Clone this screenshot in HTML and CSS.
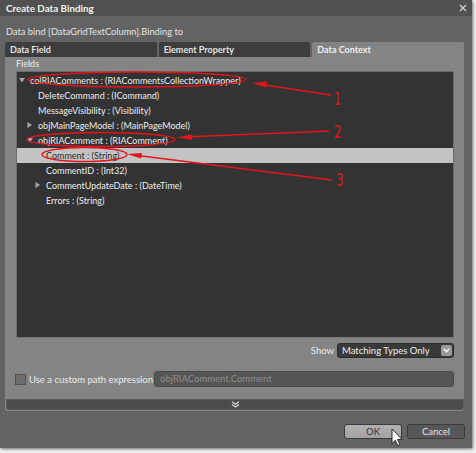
FILE: index.html
```html
<!DOCTYPE html>
<html>
<head>
<meta charset="utf-8">
<title>Create Data Binding</title>
<link rel="stylesheet" href="styles.css">
</head>
<body>
<div class="dialog">
  <div class="titlebar">
    <span class="title">Create Data Binding</span>
    <svg class="close" width="8" height="8" viewBox="0 0 8 8"><path d="M1 1L7 7M7 1L1 7" stroke="#cfcfcf" stroke-width="1.4"/></svg>
  </div>
  <div class="subtitle">Data bind [DataGridTextColumn].Binding to</div>
  <div class="tabs">
    <div class="tab">Data Field</div>
    <div class="tab">Element Property</div>
    <div class="tab active">Data Context</div>
  </div>
  <div class="panel">
    <div class="fields-label">Fields</div>
    <div class="tree">
      <div class="row l0"><span class="tw"><svg width="6" height="5" viewBox="0 0 6 5"><path d="M0 0H6L3 4.5Z" fill="#a8a8a8"/></svg></span><span>colRIAComments : (RIACommentsCollectionWrapper)</span></div>
      <div class="row l1"><span class="tw"></span><span>DeleteCommand : (ICommand)</span></div>
      <div class="row l1"><span class="tw"></span><span>MessageVisibility : (Visibility)</span></div>
      <div class="row l1"><span class="tw"><svg width="6" height="6" viewBox="0 0 6 6"><path d="M0.5 0V6L5 3Z" fill="#a8a8a8"/></svg></span><span>objMainPageModel : (MainPageModel)</span></div>
      <div class="row l1"><span class="tw"><svg width="6" height="5" viewBox="0 0 6 5"><path d="M0 0H6L3 4.5Z" fill="#a8a8a8"/></svg></span><span>objRIAComment : (RIAComment)</span></div>
      <div class="row l2 selected"><span class="tw"></span><span>Comment : (String)</span></div>
      <div class="row l2"><span class="tw"></span><span>CommentID : (Int32)</span></div>
      <div class="row l2"><span class="tw"><svg width="6" height="6" viewBox="0 0 6 6"><path d="M0.5 0V6L5 3Z" fill="#a8a8a8"/></svg></span><span>CommentUpdateDate : (DateTime)</span></div>
      <div class="row l2"><span class="tw"></span><span>Errors : (String)</span></div>
    </div>
    <div class="show-row">
      <span class="show-label">Show</span>
      <div class="select">
        <span class="select-text">Matching Types Only</span>
        <span class="select-btn"><svg width="7" height="5" viewBox="0 0 7 5"><path d="M0.8 0.8L3.5 3.6L6.2 0.8" fill="none" stroke="#f4f4f4" stroke-width="1.5"/></svg></span>
      </div>
    </div>
    <div class="path-row">
      <span class="checkbox"></span>
      <span class="path-label">Use a custom path expression</span>
      <div class="path-input">objRIAComment.Comment</div>
    </div>
    <div class="expander">
      <svg width="9" height="7" viewBox="0 0 9 7"><path d="M1 0.8L4.5 3.3L8 0.8M1 3.5L4.5 6L8 3.5" fill="none" stroke="#d8d8d8" stroke-width="1.2"/></svg>
    </div>
  </div>
  <div class="buttons">
    <div class="btn ok">OK</div>
    <div class="btn cancel">Cancel</div>
  </div>
</div>
<svg class="annot" width="476" height="453" viewBox="0 0 476 453">
  <g fill="none" stroke="#e5141b" stroke-width="1.4">
    <ellipse cx="137" cy="79.5" rx="109" ry="7.5"/>
    <ellipse cx="101" cy="139.5" rx="74" ry="7"/>
    <ellipse cx="84.5" cy="154.5" rx="42.5" ry="7"/>
    <line x1="331" y1="95" x2="258" y2="84"/>
    <line x1="329" y1="131" x2="184" y2="137"/>
    <line x1="332" y1="180" x2="134" y2="155"/>
  </g>
  <g fill="#e5141b">
    <polygon points="252,83 267,81.5 266,87.5"/>
    <polygon points="177,137.3 192,134.3 192,140"/>
    <polygon points="127,154 142,153 141,158.5"/>
  </g>
  <g class="digits" fill="#e5141b">
    <text x="334" y="105" textLength="7" lengthAdjust="spacingAndGlyphs">1</text>
    <text x="334" y="138" textLength="7.5" lengthAdjust="spacingAndGlyphs">2</text>
    <text x="336" y="186" textLength="7.5" lengthAdjust="spacingAndGlyphs">3</text>
  </g>
  <path d="M392 429V443.5L395.3 440.4L397.8 445.6L400 444.6L397.6 439.5L402 439.3Z" fill="#ffffff" stroke="#1a1a1a" stroke-width="0.9" stroke-linejoin="round"/>
</svg>
</body>
</html>
```

FILE: styles.css
```css
html, body {
  margin: 0;
  padding: 0;
}
body {
  width: 476px;
  height: 453px;
  background: #f2f2f2;
  font-family: Lato, "Noto Sans", sans-serif;
  font-size: 9px;
  color: #e8e8e8;
  position: relative;
  overflow: hidden;
}
.dialog {
  width: 472px;
  height: 448px;
  background: #636363;
  display: flex;
  flex-direction: column;
  box-shadow: 1px 1px 3px rgba(0, 0, 0, 0.55);
}
.titlebar {
  height: 16px;
  flex: none;
  background: #515151;
  display: flex;
  align-items: center;
  justify-content: space-between;
  padding: 0 5px 0 6px;
}
.title {
  font-weight: bold;
  font-size: 9.8px;
  color: #f2f2f2;
}
.close {
  display: block;
}
.subtitle {
  height: 14px;
  line-height: 14px;
  margin: 9px 0 3px 6px;
  font-size: 9.3px;
  color: #e4e4e4;
}
.tabs {
  display: grid;
  grid-template-columns: repeat(3, 1fr);
  column-gap: 2px;
  margin-left: 5px;
  width: 459px;
  height: 15px;
  flex: none;
}
.tab {
  background: #3d3d3d;
  border-radius: 2px 2px 0 0;
  line-height: 15px;
  padding-left: 5px;
  font-weight: bold;
  color: #e2e2e2;
}
.tab.active {
  background: #848484;
  color: #f0f0f0;
}
.panel {
  margin-left: 5px;
  width: 459px;
  height: 354px;
  flex: none;
  box-sizing: border-box;
  background: #848484;
  display: flex;
  flex-direction: column;
  padding: 0 10px 0 11px;
  border-radius: 0 0 3px 3px;
}
.fields-label {
  height: 14px;
  line-height: 14px;
  color: #ececec;
}
.tree {
  height: 267px;
  flex: none;
  box-sizing: border-box;
  background: #333333;
  border: 1px solid #6c6c6c;
  border-bottom-color: #777;
  padding-top: 0.5px;
}
.row {
  height: 15px;
  display: flex;
  align-items: center;
  color: #ececec;
  white-space: nowrap;
}
.row.l0 { padding-left: 1px; }
.row.l1 { padding-left: 9px; }
.row.l2 { padding-left: 17px; }
.row.selected {
  background: #c3c3c3;
  color: #2e2e2e;
}
.tw {
  width: 12px;
  flex: none;
  display: flex;
  align-items: center;
  padding-left: 1px;
  box-sizing: border-box;
}
.tw svg { display: block; }
.show-row {
  height: 15px;
  margin-top: 5px;
  display: flex;
  justify-content: flex-end;
  align-items: center;
  gap: 3px;
}
.show-label {
  color: #ececec;
  font-size: 9.5px;
}
.select {
  width: 117px;
  height: 15px;
  box-sizing: border-box;
  background: #393939;
  border: 1px solid #2c2c2c;
  border-radius: 3px;
  display: flex;
  align-items: center;
  justify-content: space-between;
  padding: 0 1px 0 4px;
}
.select-text {
  color: #ededed;
  font-size: 9.5px;
}
.select-btn {
  width: 11px;
  height: 11px;
  background: #9a9a9a;
  border-radius: 2px;
  display: flex;
  align-items: center;
  justify-content: center;
}
.select-btn svg { display: block; }
.path-row {
  height: 16px;
  margin-top: 13px;
  display: flex;
  align-items: center;
}
.checkbox {
  width: 9px;
  height: 9px;
  margin-left: -1px;
  background: #6e6e6e;
  border: 1px solid #505050;
  flex: none;
}
.path-label {
  margin-left: 3px;
  width: 125px;
  flex: none;
  color: #ececec;
  font-size: 9.5px;
  white-space: nowrap;
}
.path-input {
  flex: 1;
  height: 16px;
  box-sizing: border-box;
  background: #555555;
  border: 1px solid #4a4a4a;
  border-radius: 3px;
  line-height: 14px;
  padding-left: 5px;
  font-size: 9.5px;
  color: #8e8e8e;
}
.expander {
  height: 11px;
  margin: 12px -10px 0 -10px;
  background: #4c4c4c;
  border: 1px solid #5a5a5a;
  border-radius: 0 0 3px 3px;
  box-sizing: border-box;
  display: flex;
  align-items: center;
  justify-content: center;
}
.expander svg { display: block; }
.buttons {
  display: flex;
  justify-content: flex-end;
  gap: 5px;
  margin-top: 13px;
  padding-right: 7px;
}
.btn {
  width: 58px;
  height: 15px;
  box-sizing: border-box;
  border: 1px solid #3a3a3a;
  border-radius: 3px;
  text-align: center;
  line-height: 13px;
  font-size: 9.5px;
}
.btn.ok {
  background: linear-gradient(#b2b2b2, #a2a2a2);
  color: #333;
}
.btn.cancel {
  background: #575757;
  color: #e2e2e2;
}
.annot {
  position: absolute;
  left: 0;
  top: 0;
}
.digits text {
  font-family: "DejaVu Sans Condensed", "Liberation Sans Narrow", "DejaVu Sans", sans-serif;
  font-size: 18px;
}
```
